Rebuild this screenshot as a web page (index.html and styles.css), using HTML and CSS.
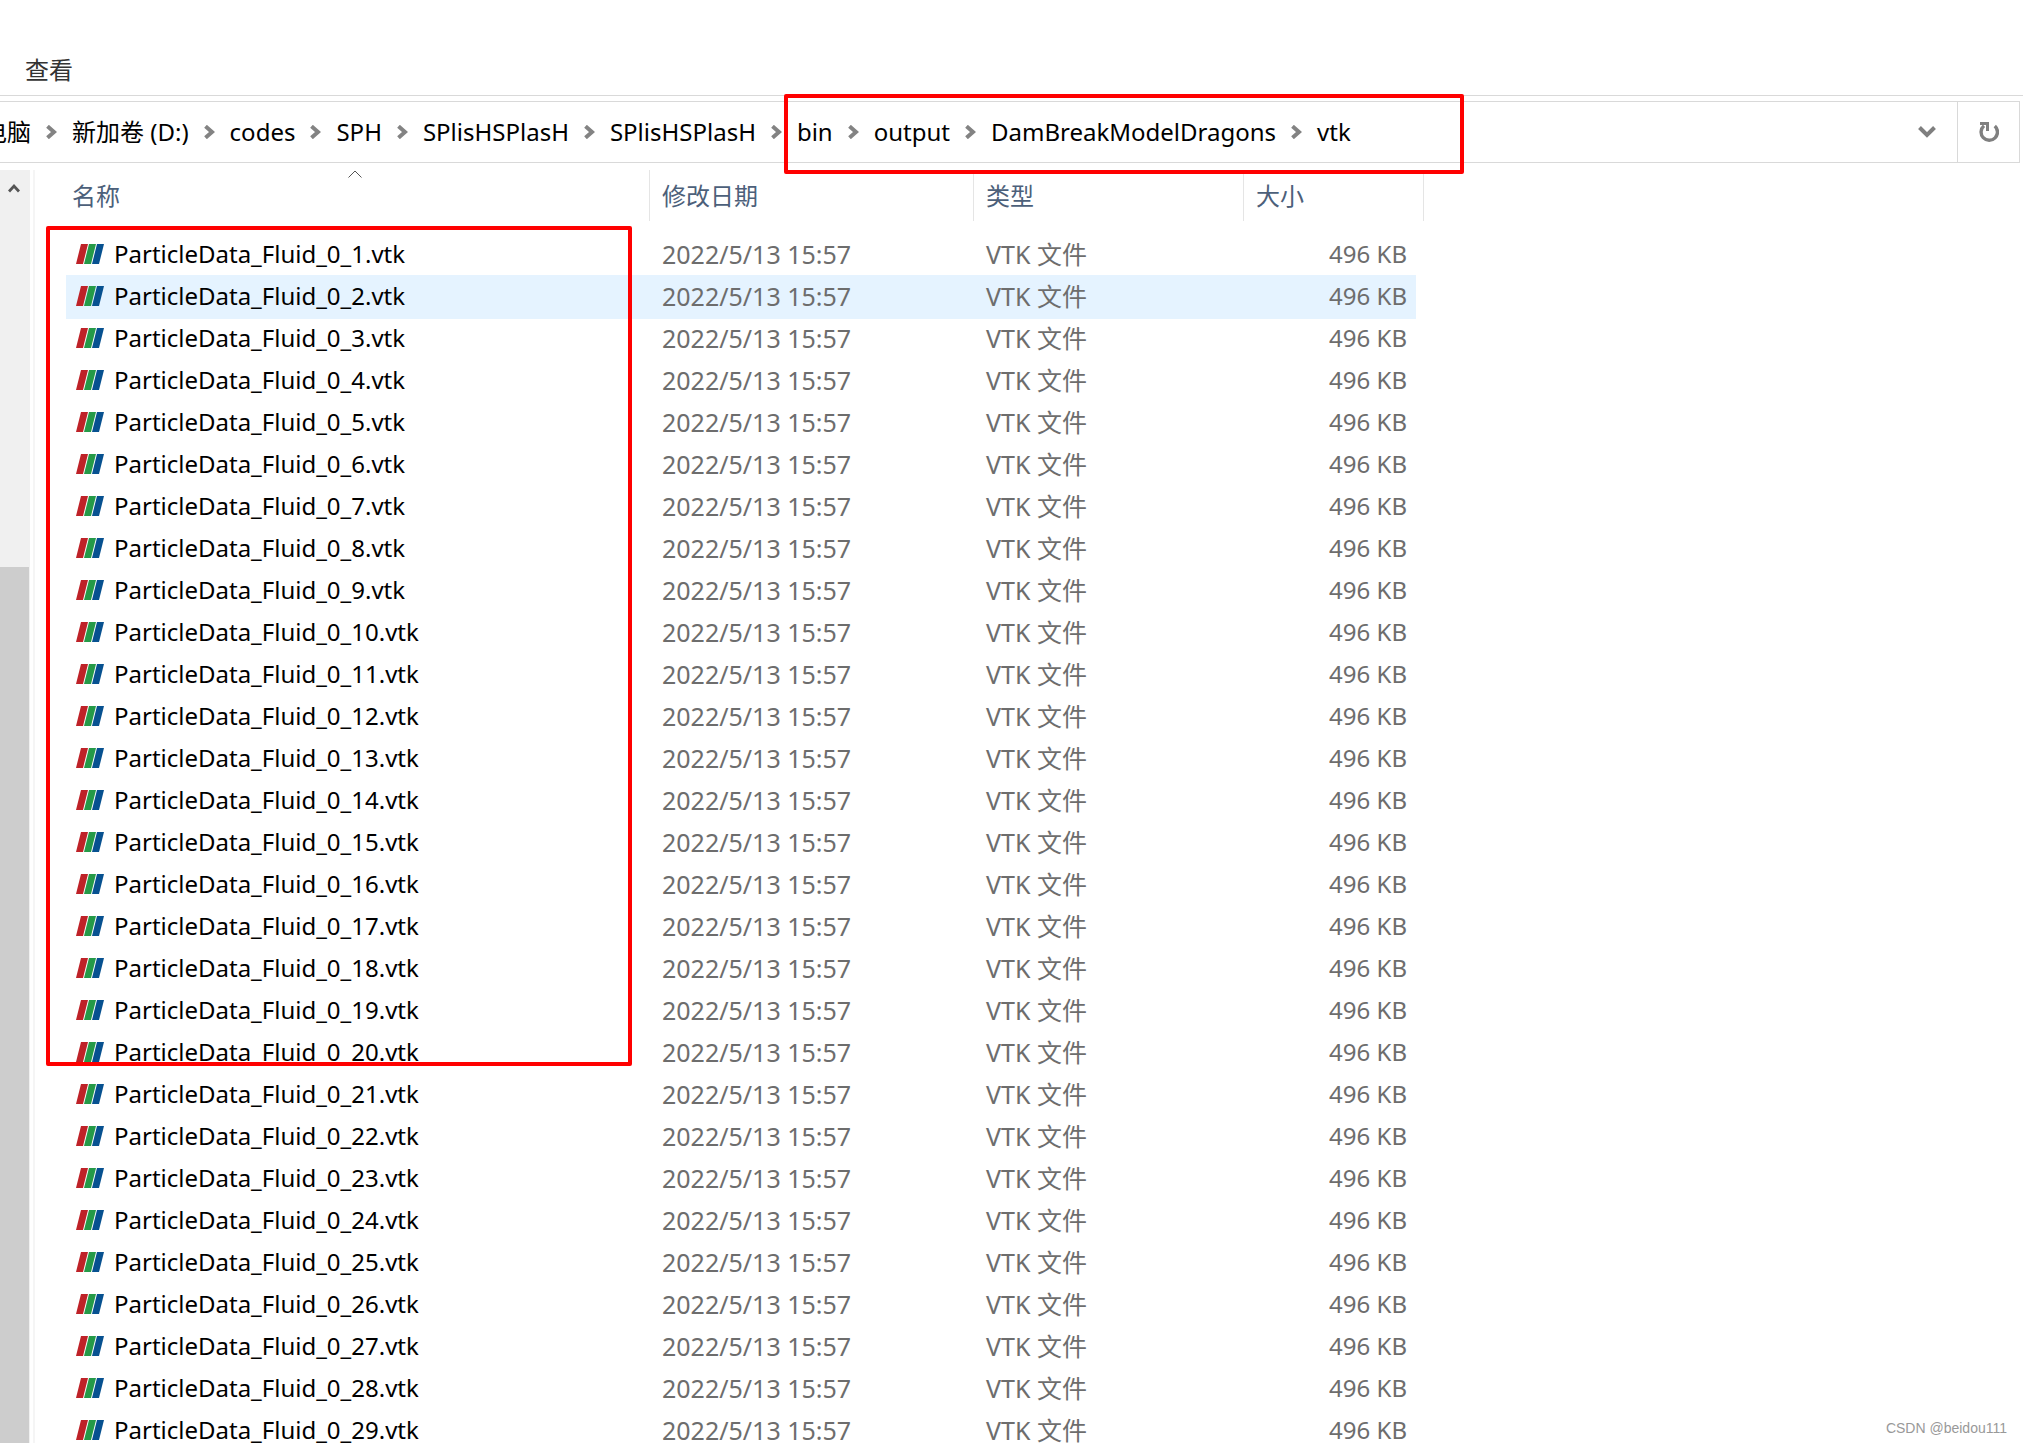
FILE: index.html
```html
<!DOCTYPE html>
<html lang="zh-CN">
<head>
<meta charset="utf-8">
<title>vtk</title>
<link rel="stylesheet" href="styles.css">
</head>
<body>
<svg class="defs" aria-hidden="true">
  <symbol id="chevron" viewBox="0 0 11 14"><path d="M1.500 1.300 8 7l-6.500 5.700" fill="none" stroke="#838383" stroke-width="4"/></symbol>
  <symbol id="vtk-icon" viewBox="0 0 28 20">
    <path d="M5 0h7L7 20H0z" fill="#be2228"/>
    <path d="M13 0h7l-5 20H8z" fill="#259a48"/>
    <path d="M21 0h7l-5 20h-7z" fill="#075190"/>
  </symbol>
</svg>
<header class="ribbon"><button class="tab" type="button">查看</button></header>
<div class="address">
  <nav class="crumbs" aria-label="路径">
    <a href="#">电脑</a><svg class="sep"><use href="#chevron"/></svg>
    <a href="#">新加卷 (D:)</a><svg class="sep"><use href="#chevron"/></svg>
    <a href="#">codes</a><svg class="sep"><use href="#chevron"/></svg>
    <a href="#">SPH</a><svg class="sep"><use href="#chevron"/></svg>
    <a href="#">SPlisHSPlasH</a><svg class="sep"><use href="#chevron"/></svg>
    <a href="#">SPlisHSPlasH</a><svg class="sep"><use href="#chevron"/></svg>
    <a href="#">bin</a><svg class="sep"><use href="#chevron"/></svg>
    <a href="#">output</a><svg class="sep"><use href="#chevron"/></svg>
    <a href="#">DamBreakModelDragons</a><svg class="sep"><use href="#chevron"/></svg>
    <a href="#">vtk</a>
  </nav>
  <button class="history" type="button" aria-label="历史记录"><svg width="18" height="12" viewBox="0 0 18 12"><path d="M1.500 1.500 9 9l7.500-7.500" fill="none" stroke="#7f7f7f" stroke-width="4"/></svg></button>
  <button class="refresh" type="button" aria-label="刷新"><svg width="20" height="22" viewBox="0 0 20 22"><path d="M5 4.800A8.200 8.200 0 1 0 15.800 5" fill="none" stroke="#808080" stroke-width="3.400"/><path d="M1 1h9v9H7V4H1z" fill="#808080"/></svg></button>
</div>
<main class="content">
  <aside class="scrollbar">
    <svg width="12" height="10" viewBox="0 0 12 10"><path d="M1 8.500 6 3l5 5.500" fill="none" stroke="#555" stroke-width="2.800"/></svg>
    <div class="thumb"></div>
  </aside>
  <section class="list">
    <table>
      <colgroup><col class="c-name"><col class="c-date"><col class="c-type"><col class="c-size"></colgroup>
      <thead>
        <tr>
          <th scope="col" aria-sort="ascending"><button type="button">名称</button><svg class="sort" width="14" height="8" viewBox="0 0 14 8"><path d="M.5 7.500 7 1l6.500 6.500" fill="none" stroke="#555"/></svg></th>
          <th scope="col"><button type="button">修改日期</button></th>
          <th scope="col"><button type="button">类型</button></th>
          <th scope="col"><button type="button">大小</button></th>
        </tr>
      </thead>
      <tbody id="files"></tbody>
    </table>
  </section>
</main>
<div class="mark mark-path"></div>
<div class="mark mark-files"></div>
<div class="credit">CSDN @beidou111</div>
<script src="files.js"></script>
</body>
</html>
```
FILE: styles.css
```css
* { box-sizing: border-box; }
body {
  margin: 0;
  height: 100vh;
  overflow: hidden;
  position: relative;
  display: flex;
  flex-direction: column;
  background: #fff;
  color: #000;
  font: 24px/32px "Noto Sans", "Noto Sans CJK SC", sans-serif;
}
button {
  padding: 0;
  border: 0;
  background: none;
  color: inherit;
  font: inherit;
}
a { color: inherit; text-decoration: none; }
svg { display: block; flex: none; }
.defs { position: absolute; width: 0; height: 0; }

.ribbon {
  height: 96px;
  padding: 54px 25px 0;
  border-bottom: 1px solid #d9d9d9;
}
.tab { display: block; color: #333; }

.address {
  display: flex;
  height: 62px;
  margin: 5px 3px 7px 0;
  border: 1px solid #d9d9d9;
  border-left: 0;
}
.crumbs {
  flex: 1;
  display: flex;
  align-items: center;
  gap: 15px;
  margin-left: -17px;
  white-space: nowrap;
}
.sep { width: 11px; height: 14px; }
.history, .refresh { display: grid; place-items: center; width: 61px; }
.refresh { width: 62px; border-left: 1px solid #d9d9d9; }

.content { flex: 1; min-height: 0; display: flex; }
.scrollbar {
  width: 30px;
  display: flex;
  flex-direction: column;
  background: #f0f0f0;
}
.scrollbar svg { margin: 13px 8px 0; }
.thumb { flex: 1; width: 29px; margin-top: 374px; background: #cdcdcd; }
.list {
  flex: 1;
  margin-left: 3px;
  padding-left: 31px;
  border-left: 2px solid #f5f5f5;
}
table { width: 1358px; table-layout: fixed; border-spacing: 0; }
.c-name { width: 584px; }
.c-date { width: 324px; }
.c-type { width: 270px; }
.c-size { width: 180px; }
th {
  position: relative;
  height: 63px;
  padding: 10px 12px 0;
  vertical-align: top;
  text-align: left;
  font-weight: 400;
  color: #4c607a;
  background: linear-gradient(#e5e5e5, #e5e5e5) right top / 1px 51px no-repeat;
}
th:first-child { padding-left: 6px; }
th button { display: block; }
.sort { position: absolute; top: 0; left: calc(50% - 10px); }
td { height: 42px; padding: 0 12px; color: #6d6d6d; font-size: 25px; white-space: nowrap; }
td:first-child { padding-left: 10px; color: #000; font-size: 24px; }
td:last-child { padding-right: 17px; text-align: right; font-size: 24px; }
tbody tr { position: relative; }
.hover td:first-child::before {
  content: "";
  position: absolute;
  inset: 0 8px -2px 0;
  z-index: -1;
  background: #e5f3ff;
}
.file { display: flex; align-items: center; gap: 10px; }
.file svg { width: 28px; height: 20px; }

.mark { position: absolute; border: 4px solid #f00; border-radius: 2px; }
.mark-path { left: 784px; top: 94px; width: 680px; height: 80px; }
.mark-files { left: 46px; top: 226px; width: 586px; height: 840px; }
.credit {
  position: absolute;
  right: 16px;
  bottom: 5px;
  color: #999;
  font: 14px/20px "Liberation Sans", sans-serif;
}
```
FILE: files.js
```js
const body = document.getElementById("files");
for (let i = 1; i <= 29; i++) {
  const row = body.insertRow();
  if (i === 2) row.className = "hover";
  row.innerHTML =
    `<td><div class="file"><svg><use href="#vtk-icon"/></svg><span>ParticleData_Fluid_0_${i}.vtk</span></div></td>` +
    "<td>2022/5/13 15:57</td><td>VTK 文件</td><td>496 KB</td>";
}
```
